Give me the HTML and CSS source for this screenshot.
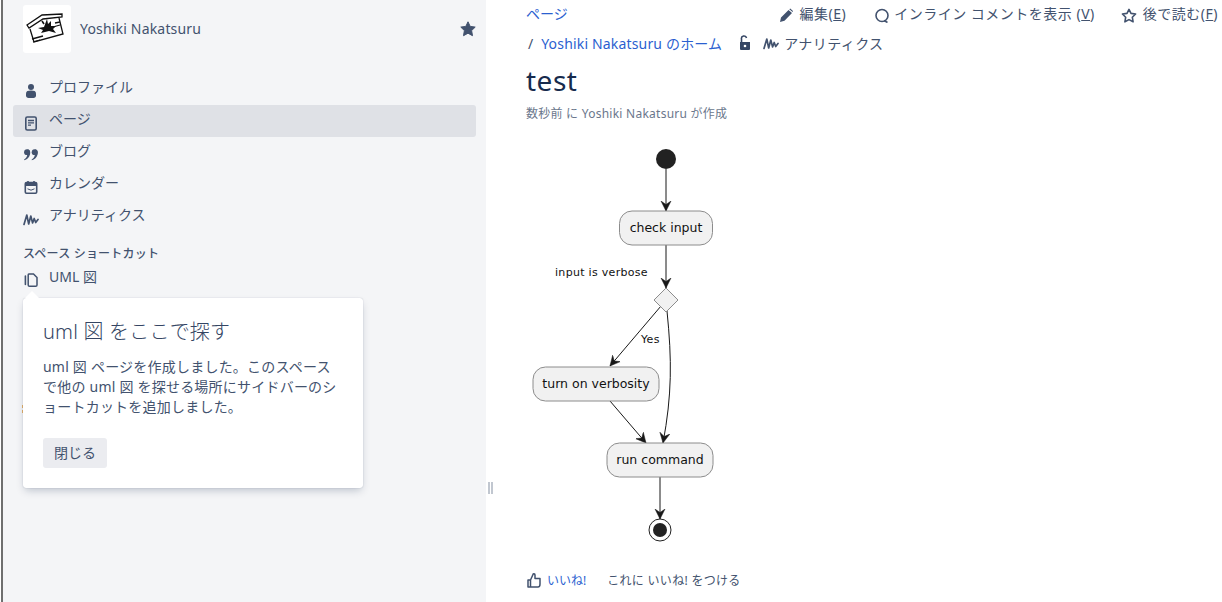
FILE: index.html
```html
<!DOCTYPE html>
<html lang="ja">
<head>
<meta charset="utf-8">
<title>test</title>
<link rel="stylesheet" href="styles.css">
</head>
<body>
<aside class="sidebar">
  <header class="space-head">
    <div class="logo">
      <svg width="48" height="48" viewBox="0 0 48 48"><g fill="none" stroke="#111" stroke-width="1.3"><path d="M4 20 L19 10 L39 9 L39 12 L20 14 L6 23 Z" fill="#fff"/><path d="M7 24 L11 37 L40 29 L36 13"/><path d="M9 34 L20 31 M30 22 L37 20 M10 37 L17 35 M32 18 L37 17"/></g><path d="M24 14 L25 19 L28 16 L28 21 L33 21 L30 24 L33 28 L26 26 L18 28 L20 25 L15 23 L21 22 Z" fill="#111"/><path d="M19 16 L21 19" stroke="#111" stroke-width="1.6"/></svg>
    </div>
    <span class="space-name">Yoshiki Nakatsuru</span>
    <svg class="fav" width="16" height="16" viewBox="0 0 16 16"><path d="M8 .8 L10.2 5.4 L15.2 6.1 L11.6 9.6 L12.5 14.7 L8 12.2 L3.5 14.7 L4.4 9.6 L.8 6.1 L5.8 5.4 Z" fill="#42526e" stroke="#42526e" stroke-linejoin="round"/></svg>
  </header>
  <nav class="nav">
    <a class="nav-item"><svg class="nav-icon" width="16" height="16" viewBox="0 0 16 16"><circle cx="8" cy="4" r="3" fill="#42526e"/><path d="M3 10.5 C3 8.2 5 7.6 8 7.6 S13 8.2 13 10.5 V12.5 C13 14 12 15 10.5 15 H5.5 C4 15 3 14 3 12.5 Z" fill="#42526e"/></svg><span>プロファイル</span></a>
    <a class="nav-item active"><svg class="nav-icon" width="16" height="16" viewBox="0 0 16 16"><rect x="2.8" y="2" width="10.4" height="13" rx="1.5" fill="none" stroke="#42526e" stroke-width="1.6"/><path d="M5 5.5 H11 M5 7.8 H11 M5 10.2 H8" stroke="#42526e" stroke-width="1.3"/></svg><span>ページ</span></a>
    <a class="nav-item"><svg class="nav-icon" width="16" height="16" viewBox="0 0 16 16"><g fill="#42526e"><circle cx="4" cy="5.2" r="2.9"/><path d="M4.4 2.4 C7.4 2.4 7.6 5.2 7 7.4 C6.3 10.3 4 12.6 1.2 13.2 C1 13 1 12.7 1.2 12.5 C3 11.4 4 9.6 4.2 8 Z"/><circle cx="11.6" cy="5.2" r="2.9"/><path d="M12 2.4 C15 2.4 15.2 5.2 14.6 7.4 C13.9 10.3 11.6 12.6 8.8 13.2 C8.6 13 8.6 12.7 8.8 12.5 C10.6 11.4 11.6 9.6 11.8 8 Z"/></g></svg><span>ブログ</span></a>
    <a class="nav-item"><svg class="nav-icon" width="16" height="16" viewBox="0 0 16 16"><rect x="2.3" y="3.5" width="11.4" height="10.7" rx="1.2" fill="none" stroke="#42526e" stroke-width="1.6"/><path d="M2.3 4 H13.7 V7 H2.3 Z" fill="#42526e"/><path d="M5 2 V4 M11 2 V4" stroke="#42526e" stroke-width="1.6"/><path d="M4.5 9.8 Q8 12.6 11.5 9.8" fill="none" stroke="#42526e" stroke-width="1"/></svg><span>カレンダー</span></a>
    <a class="nav-item"><svg class="nav-icon" width="16" height="16" viewBox="0 0 16 16"><path d="M1 13.5 L3.8 4 L5.7 13 L7.8 5 L9.6 12 L11.2 7.5 L12.7 11.5 L15 8.5" fill="none" stroke="#42526e" stroke-width="1.7" stroke-linejoin="round" stroke-linecap="round"/></svg><span>アナリティクス</span></a>
  </nav>
  <h2 class="shortcuts">スペース ショートカット</h2>
  <a class="nav-item shortcut"><svg class="nav-icon" width="16" height="16" viewBox="0 0 16 16"><path d="M6 2 H10.5 L14 5.5 V13 A1.3 1.3 0 0 1 12.7 14.3 H6.5 A1.3 1.3 0 0 1 5.2 13 V3 A1 1 0 0 1 6 2 Z" fill="none" stroke="#42526e" stroke-width="1.5"/><path d="M2.4 4 V12.5" stroke="#42526e" stroke-width="1.6" stroke-linecap="round"/></svg><span>UML 図</span></a>
  <i class="peek"></i>
  <div class="tip">
    <h3 class="tip-title">uml 図 をここで探す</h3>
    <p class="tip-body">uml 図 ページを作成しました。このスペースで他の uml 図 を探せる場所にサイドバーのショートカットを追加しました。</p>
    <button class="tip-btn">閉じる</button>
  </div>
</aside>
<div class="handle"></div>
<main class="main">
  <div class="top-row">
    <a class="link">ページ</a>
    <div class="actions">
      <a class="action wide"><svg width="16" height="16" viewBox="0 0 16 16"><path d="M2 15 L3 10.5 L10.5 3 L14 6 L6.5 13.8 Z M11.3 2.2 L12.2 1.4 L15 4 L14.6 5.1 Z" fill="#42526e"/></svg><span>編集(<u>E</u>)</span></a>
      <a class="action"><svg width="16" height="16" viewBox="0 0 16 16"><circle cx="8" cy="8.5" r="6" fill="none" stroke="#42526e" stroke-width="1.6"/><path d="M10 13.5 L13.5 15.5" stroke="#42526e" stroke-width="1.6"/></svg><span>インライン コメントを表示 (<u>V</u>)</span></a>
      <a class="action wide"><svg width="16" height="16" viewBox="0 0 16 16"><path d="M8 2.4 L10 6.4 L14.6 7 L11.3 10.2 L12.1 14.8 L8 12.6 L3.9 14.8 L4.7 10.2 L1.4 7 L6 6.4 Z" fill="none" stroke="#42526e" stroke-width="1.6" stroke-linejoin="round"/></svg><span>後で読む(<u>F</u>)</span></a>
    </div>
  </div>
  <div class="crumbs">
    <span class="sep">/</span>
    <a class="link home">Yoshiki Nakatsuru のホーム</a>
    <svg class="lock" width="16" height="16" viewBox="0 0 16 16"><path d="M4.5 7 V4 A2.5 2.5 0 0 1 9.5 3" fill="none" stroke="#344563" stroke-width="1.6"/><path d="M3 7 H13 V14 A1 1 0 0 1 12 15 H4 A1 1 0 0 1 3 14 Z" fill="#344563"/><circle cx="8" cy="11" r="1.3" fill="#fff"/></svg>
    <svg class="pulse" width="16" height="16" viewBox="0 0 16 16"><path d="M1 13.5 L3.8 4 L5.7 13 L7.8 5 L9.6 12 L11.2 7.5 L12.7 11.5 L15 8.5" fill="none" stroke="#42526e" stroke-width="1.7" stroke-linejoin="round" stroke-linecap="round"/></svg>
    <span class="crumb-text">アナリティクス</span>
  </div>
  <h1 class="title">test</h1>
  <p class="byline">数秒前 に Yoshiki Nakatsuru が作成</p>
  <svg class="diagram" width="220" height="410" viewBox="520 140 220 410">
    <defs>
      <marker id="a" markerWidth="12" markerHeight="12" refX="10" refY="6" orient="auto" markerUnits="userSpaceOnUse"><path d="M0 1 L10 6 L0 11 L3.5 6 Z" fill="#181818" stroke="#181818" stroke-width=".5"/></marker>
    </defs>
    <g fill="none" stroke="#181818">
      <path d="M666 169 V211" marker-end="url(#a)"/>
      <path d="M666 245 V288" marker-end="url(#a)"/>
      <path d="M661 306 L610 366" marker-end="url(#a)"/>
      <path d="M667 311 C672 360 672 395 663 443" marker-end="url(#a)"/>
      <path d="M610 401 L646 443" marker-end="url(#a)"/>
      <path d="M660 477 V519" marker-end="url(#a)"/>
    </g>
    <circle cx="666" cy="159" r="10" fill="#222"/>
    <g fill="#f1f1f1" stroke="#8c8c8c" stroke-width="1">
      <rect x="619.5" y="211" width="93" height="34" rx="12.5"/>
      <path d="M666 288 L678 300 L666 312 L654 300 Z"/>
      <rect x="533" y="367" width="126" height="34" rx="12.5"/>
      <rect x="607" y="443" width="106" height="34" rx="12.5"/>
    </g>
    <circle cx="660" cy="530" r="11" fill="#fff" stroke="#222"/>
    <circle cx="660" cy="530" r="7" fill="#222"/>
    <g class="dia-text">
      <text x="666" y="232" text-anchor="middle">check input</text>
      <text x="596" y="388" text-anchor="middle">turn on verbosity</text>
      <text x="660" y="464" text-anchor="middle">run command</text>
    </g>
    <g class="dia-small">
      <text x="555" y="276">input is verbose</text>
      <text x="641" y="343">Yes</text>
    </g>
  </svg>
  <div class="likes">
    <svg width="16" height="16" viewBox="0 0 16 16"><path d="M2 8 H4.5 V15 H2 Z M4.5 8 L7 2.5 C7 1.5 9 1.3 9 3 V6.5 H14 V12 C14 14 13 15 12 15 H4.5" fill="none" stroke="#42526e" stroke-width="1.5" stroke-linejoin="round"/></svg>
    <a class="like-link">いいね!</a>
    <span class="like-text">これに いいね! をつける</span>
  </div>
</main>
</body>
</html>
```

FILE: styles.css
```css
* { box-sizing: border-box; }
html, body { margin: 0; height: 602px; overflow: hidden; }
body {
  display: flex;
  padding-left: 1px;
  background: #fff;
  color: #172b4d;
  font-family: "Noto Sans", "Noto Sans CJK JP", sans-serif;
  font-size: 14px;
}
.sidebar {
  position: relative;
  width: 485px;
  flex: none;
  background: #f4f5f7;
  border-left: 2px solid #6f6f6f;
  padding: 5px 10px 0;
  color: #42526e;
}
.space-head { display: flex; align-items: center; padding: 0 0 0 10px; height: 48px; }
.logo { width: 48px; height: 48px; background: #fff; border-radius: 3px; flex: none; }
.space-name { margin-left: 9px; margin-top: -2px; font-size: 14px; letter-spacing: .18px; flex: 1; color: #42526e; }
.nav { margin-top: 20px; display: flex; flex-direction: column; }
.nav-item { display: flex; align-items: center; height: 32px; padding-left: 10px; border-radius: 3px; color: #42526e; }
.nav-item span { margin-left: 10px; margin-top: -6px; }
.nav-icon { margin-top: 4px; flex: none; }
.active { background: #dfe1e6; }
.shortcuts { margin: 13px 0 0 10px; font-size: 12px; line-height: 16px; font-weight: 500; letter-spacing: .2px; color: #42526e; }
.shortcut { height: 32px; }
.nav-item.shortcut span { margin-top: -4px; }
.peek { position: absolute; left: 19px; top: 405px; height: 8px; border-left: 1px dashed #e8b36a; }
.tip {
  position: absolute;
  left: 20px;
  top: 298px;
  width: 340px;
  height: 190px;
  padding: 20px;
  background: #fff;
  border-radius: 3px;
  box-shadow: 0 4px 8px -2px rgba(9,30,66,.25), 0 0 1px rgba(9,30,66,.31);
}
.tip::before {
  content: "";
  position: absolute;
  left: 2px;
  top: -7px;
  border: 7px solid transparent;
  border-top: 0;
  border-bottom-color: #fff;
}
.tip-title { margin: 0; font-size: 20px; line-height: 28px; font-weight: 300; letter-spacing: .2px; color: #344563; }
.tip-body { margin: 11px 0 0; font-size: 14px; line-height: 20px; letter-spacing: .22px; color: #42526e; }
.tip-btn {
  display: block;
  margin-top: 21px;
  width: 64px;
  height: 30px;
  border: 0;
  border-radius: 3px;
  background: #ebecf0;
  color: #42526e;
  font: inherit;
  padding: 0 0 3px;
}
.handle {
  position: absolute;
  left: 488px;
  top: 482px;
  width: 5px;
  height: 12px;
  border-left: 2px solid #c1c7d0;
  border-right: 2px solid #c1c7d0;
}
.main { flex: 1; min-width: 0; padding: 0 4px 0 40px; }
.top-row { display: flex; justify-content: space-between; height: 26px; align-items: center; }
.link { color: #2b5fd0; }
.home { letter-spacing: .17px; }
.actions { display: flex; gap: 28px; color: #42526e; }
.action { display: flex; align-items: center; gap: 4px; letter-spacing: .5px; }
.action svg { margin-top: 4px; }
.action.wide svg { margin-left: -2px; margin-right: 2px; }
.crumbs { display: flex; align-items: center; height: 34px; color: #42526e; }
.sep { margin-left: 2px; margin-right: 8px; }
.lock { margin-left: 15px; }
.pulse { margin-left: 10px; }
.crumb-text { margin-left: 5px; letter-spacing: .4px; }
.title { margin: 3px 0 0; font-size: 28px; line-height: 34px; font-weight: 400; letter-spacing: .5px; color: #172b4d; }
.byline { margin: 9px 0 0; font-size: 12px; line-height: 16px; letter-spacing: .25px; color: #6b778c; }
.diagram { display: block; margin: 18px 0 0 -6px; }
.dia-text { font: 12.5px "DejaVu Sans", sans-serif; fill: #111; }
.dia-small { font: 11px "DejaVu Sans", sans-serif; letter-spacing: .3px; fill: #111; }
.likes { display: flex; align-items: center; height: 20px; margin-top: 20px; font-size: 12px; }
.like-link { margin-left: 5px; color: #2b5fd0; }
.like-text { margin-left: 21px; letter-spacing: .3px; color: #42526e; }
```
